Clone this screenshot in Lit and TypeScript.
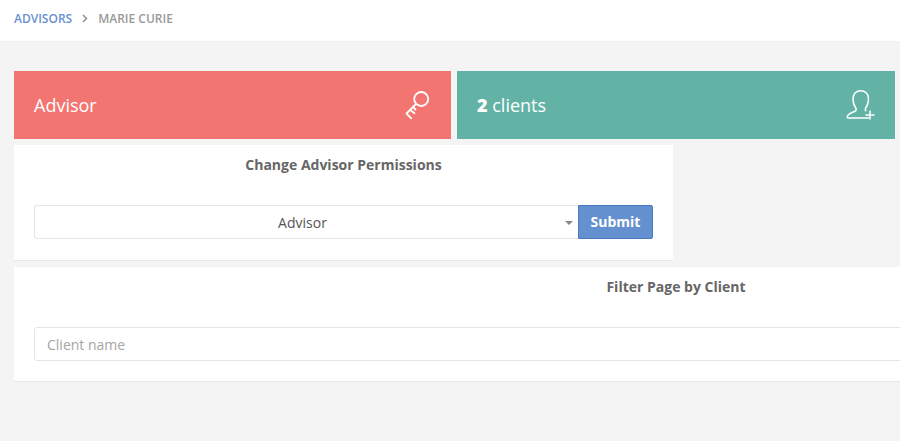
import { LitElement, html, css } from "lit";
import { customElement } from "lit/decorators.js";

@customElement("app-root")
export class AppRoot extends LitElement {
  static styles = css`
    :host {
      display: block;
      width: 900px;
      height: 441px;
      overflow: hidden;
      background: #f4f4f4;
      font-family: "Open Sans", sans-serif;
      color: #666;
    }
    * { box-sizing: border-box; }
    .crumbs {
      height: 42px;
      background: #fff;
      border-bottom: 1px solid #efefef;
      padding: 0 14px 5px;
      display: flex;
      align-items: center;
      font-size: 12px;
      font-weight: 600;
      text-transform: uppercase;
      letter-spacing: 0;
    }
    .crumbs .link { color: #6a91cf; }
    .crumbs .sep { color: #888; margin: 0 10px 0 10px; display: flex; }
    .crumbs .cur { color: #999; }
    .content { padding: 29px 0 0 14px; display: flex; flex-direction: column; }
    .stats { display: flex; gap: 6px; width: 881px; margin-bottom: 6px; }
    .stat {
      height: 68px;
      padding: 0 20px;
      display: flex;
      align-items: center;
      justify-content: space-between;
      color: #fff;
      font-size: 18px;
    }
    .stat b { font-weight: 800; }
    .red { width: 437px; background: #f27572; }
    .green { width: 438px; background: #62b3a5; }
    .panel {
      background: #fff;
      border-bottom: 1px solid #e8e8e8;
      padding: 11px 20px 21px;
    }
    .p1 { width: 659px; height: 116px; margin-bottom: 6px; }
    .p2 { width: 1324px; height: 115px; }
    h4 {
      margin: 0 0 31px;
      font-size: 14px;
      line-height: 18px;
      font-weight: 700;
      text-align: center;
      color: #666;
    }
    .row { display: flex; }
    .select {
      flex: 1;
      height: 34px;
      border: 1px solid #e5e5e5;
      border-right: none;
      border-radius: 3px 0 0 3px;
      display: flex;
      align-items: center;
      justify-content: center;
      position: relative;
      font-size: 14px;
      color: #555;
      padding-right: 8px;
    }
    .caret {
      position: absolute;
      right: 5px;
      top: 15px;
      width: 0;
      height: 0;
      border-left: 4px solid transparent;
      border-right: 4px solid transparent;
      border-top: 4px solid #888;
    }
    button {
      width: 75px;
      height: 34px;
      background: #6590cf;
      border: 1px solid #4a7bc0;
      border-radius: 0 2px 2px 0;
      color: #fff;
      font: 700 14px "Open Sans", sans-serif;
      padding: 0 0 2px;
    }
    .input {
      height: 34px;
      border: 1px solid #e5e5e5;
      border-radius: 3px;
      padding: 0 12px;
      display: flex;
      align-items: center;
      font-size: 14px;
      color: #a5a5a5;
    }
    svg { display: block; }
  `;

  render() {
    return html`
      <nav class="crumbs">
        <span class="link">Advisors</span>
        <span class="sep"><svg width="6" height="9" viewBox="0 0 6 9" fill="none" stroke="currentColor" stroke-width="1.4"><path d="M1 1l3.5 3.5L1 8"/></svg></span>
        <span class="cur">Marie Curie</span>
      </nav>
      <div class="content">
        <div class="stats">
          <div class="stat red">
            <span>Advisor</span>
            <svg width="26" height="30" viewBox="0 0 26 30" fill="none" stroke="#fff" stroke-width="1.8">
              <circle cx="16.2" cy="9" r="7"/>
              <path d="M11 14L1.500 23.500M1 23l5.700 5.800M5 19.800l5 4M8 17l3 3"/>
            </svg>
          </div>
          <div class="stat green">
            <span><b>2</b> clients</span>
            <svg width="30" height="32" viewBox="0 0 30 32" fill="none" stroke="#fff" stroke-width="1.5">
              <path d="M24 29H3.500c-1 0-1.500-.6-1-2 .8-2 4-3.500 7.500-4.800 1.500-.6 1.500-2.200.5-3.700C9 16.500 8 13 8 9.500 8 4.500 11.500 1.800 15.700 1.800s7.800 2.700 7.800 7.700c0 3.500-1 7-2.500 9-1 1.500-1 3 .3 3.700"/>
              <path d="M25 21.500v9M20.500 26h9"/>
            </svg>
          </div>
        </div>
        <section class="panel p1">
          <h4>Change Advisor Permissions</h4>
          <div class="row">
            <div class="select">Advisor<span class="caret"></span></div>
            <button>Submit</button>
          </div>
        </section>
        <section class="panel p2">
          <h4>Filter Page by Client</h4>
          <div class="input">Client name</div>
        </section>
      </div>
    `;
  }
}
